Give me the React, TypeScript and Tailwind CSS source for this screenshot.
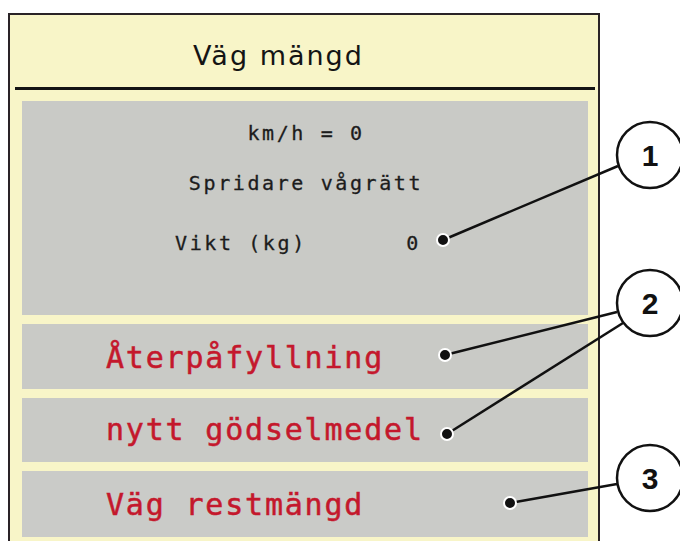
export default function App() {
  // callout lines: dot -> circle edge
  const leaders = [
    { x1: 443, y1: 240, x2: 618, y2: 166 },
    { x1: 445, y1: 355, x2: 617, y2: 312 },
    { x1: 447, y1: 434, x2: 623, y2: 323 },
    { x1: 510, y1: 503, x2: 617, y2: 484 },
  ];
  const badges = [
    { cx: 650, cy: 155, label: "1" },
    { cx: 650, cy: 303, label: "2" },
    { cx: 650, cy: 478, label: "3" },
  ];

  const small = "text-[20px] leading-[24px] tracking-[2.6px] text-[#1c1c1c] [-webkit-text-stroke:0.3px_currentColor]";
  const red = "text-[30px] leading-[34px] tracking-[1.8px] text-[#c4182c] [-webkit-text-stroke:0.5px_currentColor]";

  return (
    <div className="relative w-[680px] h-[541px] overflow-hidden bg-white font-['DejaVu_Sans_Mono',monospace]">
      <div className="ml-[8px] mt-[13px] w-[592px] h-[540px] border-2 border-b-0 border-[#2a2327] bg-[#f8f5c8]">
        {/* header */}
        <div className="h-[72px] pt-[25px] pl-[183px]">
          <span className="text-[27px] leading-[32px] tracking-[2px] text-[#141414] font-['DejaVu_Sans',sans-serif]">
            Väg mängd
          </span>
        </div>
        <div className="ml-[5px] mr-[3px] h-[3px] bg-[#141414]" />

        <div className="flex flex-col gap-[9px] pt-[11px] pl-[12px] pr-[10px]">
          <div className="h-[214px] bg-[#c9cac6] flex flex-col items-center pt-[20px] pl-[2px]">
            <div className={small}>km/h = 0</div>
            <div className={small + " mt-[26px]"}>Spridare vågrätt</div>
            <div className="mt-[36px] flex w-[246px] justify-between self-start ml-[151px]">
              <span className={small}>Vikt (kg)</span>
              <span className={small}>0</span>
            </div>
          </div>
          <div className="h-[65px] bg-[#c9cac6] flex items-center pl-[84px] pt-[2px]">
            <span className={red}>Återpåfyllning</span>
          </div>
          <div className="h-[64px] bg-[#c9cac6] flex items-center pl-[84px]">
            <span className={red}>nytt gödselmedel</span>
          </div>
          <div className="h-[66px] bg-[#cacbc8] flex items-center pl-[84px] pt-[2px]">
            <span className={red}>Väg restmängd</span>
          </div>
        </div>
      </div>

      {/* callouts */}
      <svg className="absolute inset-0" width="680" height="541" viewBox="0 0 680 541">
        {leaders.map((l, i) => (
          <line key={i} x1={l.x1} y1={l.y1} x2={l.x2} y2={l.y2} stroke="#111" strokeWidth="2.5" />
        ))}
        {leaders.map((l, i) => (
          <circle key={"d" + i} cx={l.x1} cy={l.y1} r="6" fill="#111" stroke="#fff" strokeWidth="2" />
        ))}
        {badges.map((b) => (
          <g key={b.label}>
            <circle cx={b.cx} cy={b.cy} r="33" fill="#fff" stroke="#111" strokeWidth="2.5" />
            <text
              x={b.cx}
              y={b.cy + 11}
              textAnchor="middle"
              fontFamily="Liberation Sans, Arial, sans-serif"
              fontWeight="bold"
              fontSize="30"
              fill="#111"
            >
              {b.label}
            </text>
          </g>
        ))}
      </svg>
    </div>
  );
}
